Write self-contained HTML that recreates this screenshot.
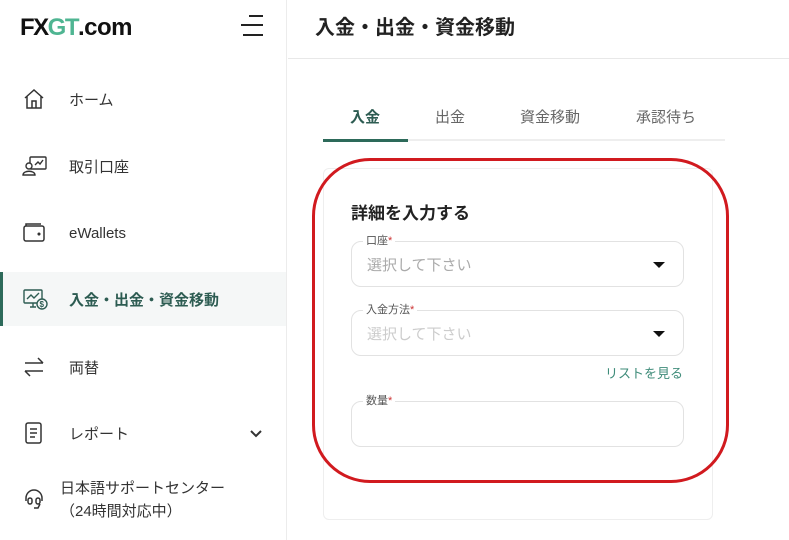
<!DOCTYPE html>
<html><head><meta charset="utf-8"><style>
*{margin:0;padding:0;box-sizing:border-box}
body{width:789px;height:540px;overflow:hidden;background:#fff;font-family:"Liberation Sans","Noto Sans CJK JP",sans-serif;color:#333;position:relative}
.a{position:absolute;white-space:nowrap}
.side{position:absolute;left:0;top:0;width:287px;height:540px;border-right:1px solid #ececec}
.item{position:absolute;left:0;width:286px;height:54px;display:flex;align-items:center;font-size:15px;color:#333}
.item svg{position:absolute;left:22px}
.item span{position:absolute;left:69px}
.field{position:absolute;left:351px;width:333px;height:46px;border:1px solid #e2e2e2;border-radius:10px}
.lbl{position:absolute;font-size:11px;color:#555;background:#fff;padding:0 3px}
.lbl b{color:#c33;font-weight:normal}
.ph{position:absolute;left:15px;top:12px;font-size:15px;color:#aaa}
.arr{position:absolute;right:18px;top:20px;width:0;height:0;border-left:6px solid transparent;border-right:6px solid transparent;border-top:6px solid #111}
</style></head><body>
<div class="side">
 <div class="a" style="left:20px;top:14px;font-size:24px;font-weight:bold;letter-spacing:-1.5px;color:#111">FX<span style="color:#4fb592">GT</span><span style="letter-spacing:-0.5px">.com</span></div>
 <div class="a" style="left:249px;top:15px;width:14px;height:2px;background:#222"></div>
 <div class="a" style="left:241px;top:24px;width:22px;height:2px;background:#222"></div>
 <div class="a" style="left:243px;top:34px;width:20px;height:2px;background:#222"></div>

 <div class="item" style="top:72px"><svg width="24" height="24" viewBox="0 0 24 24" fill="none" stroke="#333" stroke-width="1.5"><path d="M3 11 L12 3 L21 11 M5 9.5 V21 H19 V9.5 M10 21 V14 H14 V21"/></svg><span>ホーム</span></div>
 <div class="item" style="top:139px"><svg width="26" height="24" viewBox="0 0 26 24" fill="none" stroke="#333" stroke-width="1.4"><rect x="8" y="3" width="16" height="12" rx="1"/><circle cx="7" cy="12" r="3" fill="#fff"/><path d="M1 21 C1 16 13 16 13 21 Z" fill="#fff"/><path d="M13 11 L16 8 L18 10 L21 6"/></svg><span>取引口座</span></div>
 <div class="item" style="top:206px"><svg width="24" height="24" viewBox="0 0 24 24" fill="none" stroke="#333" stroke-width="1.5"><rect x="2" y="5" width="20" height="15" rx="2"/><path d="M4 5 V3 H19"/><circle cx="17" cy="13" r="0.8" fill="#333"/></svg><span>eWallets</span></div>
 <div class="item" style="top:272px;background:#f5f7f7;color:#2d5c52;font-weight:bold"><div class="a" style="left:0;top:0;width:3px;height:54px;background:#2d6a5a"></div><svg width="26" height="24" viewBox="0 0 26 24" fill="none" stroke="#2d5c52" stroke-width="1.4"><rect x="2" y="3" width="18" height="13" rx="1"/><path d="M5 12 L9 8 L12 11 L17 6 M8 20 H14 M11 16 V20"/><circle cx="20" cy="17" r="5" fill="#f5f7f7"/><text x="17.5" y="20" font-size="8" fill="#2d5c52" stroke="none">$</text></svg><span>入金・出金・資金移動</span></div>
 <div class="item" style="top:340px"><svg width="24" height="24" viewBox="0 0 24 24" fill="none" stroke="#333" stroke-width="1.5"><path d="M3 8 H21 M16 3 L21 8 M21 16 H3 M8 21 L3 16"/></svg><span>両替</span></div>
 <div class="item" style="top:406px"><svg width="24" height="24" viewBox="0 0 24 24" fill="none" stroke="#333" stroke-width="1.5"><rect x="4" y="2" width="15" height="20" rx="2"/><path d="M8 8 H15 M8 12 H15 M8 16 H13"/></svg><span>レポート</span><svg style="left:248px" width="16" height="16" viewBox="0 0 16 16" fill="none" stroke="#333" stroke-width="2"><path d="M3 6 L8 11 L13 6"/></svg></div>
 <div class="item" style="top:472px;height:56px"><svg style="top:15px" width="24" height="24" viewBox="0 0 24 24" fill="none" stroke="#333" stroke-width="1.5"><path d="M4 14 V11 A8 8 0 0 1 20 11 V14"/><rect x="6" y="11" width="4" height="6" rx="2"/><rect x="14" y="11" width="4" height="6" rx="2"/><path d="M12 21 H16 L18 17"/></svg><span style="left:60px;top:5px;line-height:23px">日本語サポートセンター<br>（24時間対応中）</span></div>
</div>

<div class="a" style="left:315px;top:11px;font-size:20px;font-weight:bold;color:#222">入金・出金・資金移動</div>
<div class="a" style="left:288px;top:58px;width:501px;height:1px;background:#e8e8e8"></div>

<div class="a" style="left:350px;top:106px;font-size:15px;font-weight:bold;color:#2d5c52">入金</div>
<div class="a" style="left:435px;top:106px;font-size:15px;color:#666">出金</div>
<div class="a" style="left:520px;top:106px;font-size:15px;color:#666">資金移動</div>
<div class="a" style="left:636px;top:106px;font-size:15px;color:#666">承認待ち</div>
<div class="a" style="left:323px;top:139px;width:402px;height:2px;background:#eee"></div>
<div class="a" style="left:323px;top:139px;width:85px;height:3px;background:#2d6a5a"></div>

<div class="a" style="left:323px;top:168px;width:390px;height:352px;border:1px solid #eee;border-radius:6px"></div>
<div class="a" style="left:312px;top:158px;width:417px;height:325px;border:3px solid #d11a1f;border-radius:58px"></div>

<div class="a" style="left:351px;top:199px;font-size:17px;font-weight:bold;color:#222">詳細を入力する</div>

<div class="field" style="top:241px"><div class="ph">選択して下さい</div><div class="arr"></div></div>
<div class="lbl" style="left:363px;top:232px">口座<b>*</b></div>
<div class="field" style="top:310px"><div class="ph" style="color:#ccc">選択して下さい</div><div class="arr"></div></div>
<div class="lbl" style="left:363px;top:301px">入金方法<b>*</b></div>
<div class="a" style="left:605px;top:363px;font-size:13px;color:#3f8c7a">リストを見る</div>
<div class="field" style="top:401px"></div>
<div class="lbl" style="left:363px;top:392px">数量<b>*</b></div>
</body></html>
